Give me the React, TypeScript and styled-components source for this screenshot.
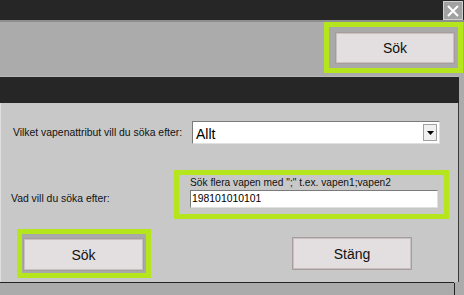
import React from "react";
import styled, { createGlobalStyle } from "styled-components";

const GlobalStyle = createGlobalStyle`
  html, body {
    margin: 0;
    padding: 0;
    background: #ababab;
    font-family: "Liberation Sans", Arial, sans-serif;
  }
`;

const lime = "#b5e61d";

const Screen = styled.div`
  width: 464px;
  height: 295px;
  overflow: hidden;
  display: flex;
  flex-direction: column;
  background: #ababab;
`;

const TitleBar = styled.div`
  height: 19px;
  flex: none;
  background: #262626;
  border-bottom: 2px solid #8e8e8e;
  display: flex;
  justify-content: flex-end;
  align-items: flex-start;
  padding: 1px 1px 0 0;
`;

const CloseButton = styled.div`
  width: 18px;
  height: 17px;
  background: #a2a2a2;
  border: 1px solid #d0d0d0;
  display: flex;
  align-items: center;
  justify-content: center;
`;

const Toolbar = styled.div`
  height: 54px;
  flex: none;
  display: flex;
  justify-content: flex-end;
  align-items: flex-start;
  padding-right: 1px;
`;

const Highlight = styled.div<{ $pad: string }>`
  border: 5px solid ${lime};
  padding: ${(p) => p.$pad};
  background: #a9a9a9;
  display: flex;
  flex-direction: column;
`;

const Button = styled.div<{ $w: number; $h: number }>`
  width: ${(p) => p.$w}px;
  height: ${(p) => p.$h}px;
  box-sizing: border-box;
  background: #e3dfe0;
  border: 1px solid #a79d9d;
  box-shadow: inset 0 0 0 1px #c9c1c1;
  display: flex;
  align-items: center;
  justify-content: center;
  font-size: 14px;
  color: #111;
`;

const DarkBand = styled.div`
  height: 26px;
  flex: none;
  width: 459px;
  background: #262626;
  border-top: 1px solid #b8b8b8;
`;

const Panel = styled.div`
  width: 459px;
  height: 179px;
  flex: none;
  box-sizing: border-box;
  background: #c8c8c8;
  border-left: 1px solid #dedede;
  border-right: 1px solid #3a3a3a;
  display: flex;
  flex-direction: column;
  padding-top: 18px;
`;

const BottomLine = styled.div`
  height: 1px;
  width: 454px;
  background: #222;
  flex: none;
`;

const BottomArea = styled.div`
  flex: 1;
  width: 454px;
  border-right: 1px solid #222;
`;

const Row = styled.div<{ $mt?: number }>`
  display: flex;
  align-items: center;
  margin-top: ${(p) => p.$mt ?? 0}px;
`;

const Label = styled.div<{ $w: number; $pl: number }>`
  width: ${(p) => p.$w}px;
  padding-left: ${(p) => p.$pl}px;
  box-sizing: border-box;
  font-size: 10.4px;
  color: #111;
  flex: none;
`;

const Combo = styled.div`
  width: 248px;
  height: 23px;
  box-sizing: border-box;
  background: #fff;
  border: 1px solid #7a7a7a;
  border-right-color: #e0e0e0;
  border-bottom-color: #e0e0e0;
  display: flex;
  align-items: center;
  justify-content: space-between;
  padding: 2px 2px 0 3px;
  font-size: 14px;
  color: #000;
`;

const ComboArrow = styled.div`
  width: 14px;
  height: 17px;
  margin-top: -2px;
  box-sizing: border-box;
  background: #f0f0f0;
  border: 1px solid #a0a0a0;
  display: flex;
  align-items: center;
  justify-content: center;
`;

const HintBox = styled.div`
  width: 275px;
  height: 49px;
  box-sizing: border-box;
  border: 5px solid ${lime};
  padding: 1px 0 0 11px;
  display: flex;
  flex-direction: column;
`;

const Hint = styled.div`
  font-size: 10.2px;
  color: #111;
  height: 13px;
  line-height: 13px;
`;

const TextInput = styled.div`
  width: 248px;
  height: 18px;
  margin-top: 1px;
  box-sizing: border-box;
  background: #fff;
  border: 1px solid #7a7a7a;
  border-right-color: #e0e0e0;
  border-bottom-color: #e0e0e0;
  font-size: 10.4px;
  line-height: 16px;
  padding-left: 1px;
  color: #000;
`;

const ButtonRow = styled.div`
  display: flex;
  align-items: flex-start;
  margin-top: 10px;
  padding-left: 16px;
`;

const Spacer = styled.div<{ $w: number }>`
  width: ${(p) => p.$w}px;
  flex: none;
`;

export default function App() {
  return (
    <>
      <GlobalStyle />
      <Screen>
        <TitleBar>
          <CloseButton>
            <svg width="12" height="12" viewBox="0 0 12 12">
              <path d="M1 1 L11 11 M11 1 L1 11" stroke="#fff" strokeWidth="2" />
            </svg>
          </CloseButton>
        </TitleBar>
        <Toolbar>
          <Highlight $pad="5px 3px 4px 6px">
            <Button $w={120} $h={32}>Sök</Button>
          </Highlight>
        </Toolbar>
        <DarkBand />
        <Panel>
          <Row>
            <Label $w={191} $pl={12}>Vilket vapenattribut vill du söka efter:</Label>
            <Combo>
              Allt
              <ComboArrow>
                <svg width="7" height="4" viewBox="0 0 7 4">
                  <path d="M0 0 L7 0 L3.5 4 Z" fill="#000" />
                </svg>
              </ComboArrow>
            </Combo>
          </Row>
          <Row $mt={26}>
            <Label $w={173} $pl={10} style={{ alignSelf: "flex-end", paddingBottom: 15 }}>
              Vad vill du söka efter:
            </Label>
            <HintBox>
              <Hint>Sök flera vapen med ";" t.ex. vapen1;vapen2</Hint>
              <TextInput>198101010101</TextInput>
            </HintBox>
          </Row>
          <ButtonRow>
            <Highlight $pad="4px 2px 2px 1px">
              <Button $w={121} $h={33}>Sök</Button>
            </Highlight>
            <Spacer $w={141} />
            <div style={{ marginTop: 8 }}>
              <Button $w={120} $h={33}>Stäng</Button>
            </div>
          </ButtonRow>
        </Panel>
        <BottomLine />
        <BottomArea />
      </Screen>
    </>
  );
}
